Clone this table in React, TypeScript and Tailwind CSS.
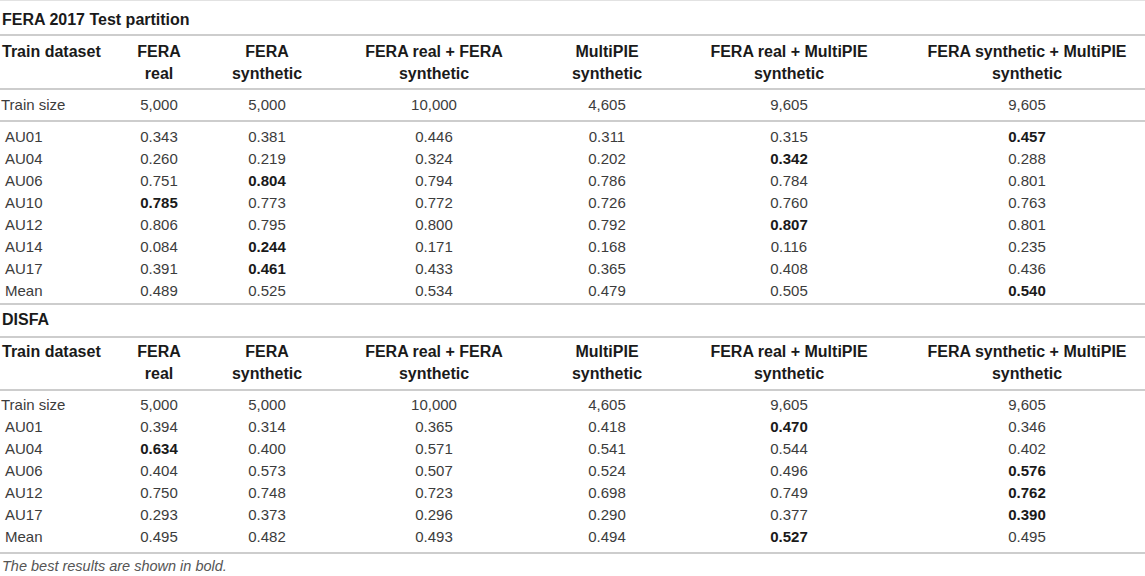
import React from 'react';

const cols = 'grid grid-cols-[107px_104px_112px_222px_124px_240px_236px]';

const headers: [string, string][] = [
  ['FERA', 'real'],
  ['FERA', 'synthetic'],
  ['FERA real + FERA', 'synthetic'],
  ['MultiPIE', 'synthetic'],
  ['FERA real + MultiPIE', 'synthetic'],
  ['FERA synthetic + MultiPIE', 'synthetic'],
];

// a leading * marks the best result in the row
const fera: [string, string[]][] = [
  ['AU01', ['0.343', '0.381', '0.446', '0.311', '0.315', '*0.457']],
  ['AU04', ['0.260', '0.219', '0.324', '0.202', '*0.342', '0.288']],
  ['AU06', ['0.751', '*0.804', '0.794', '0.786', '0.784', '0.801']],
  ['AU10', ['*0.785', '0.773', '0.772', '0.726', '0.760', '0.763']],
  ['AU12', ['0.806', '0.795', '0.800', '0.792', '*0.807', '0.801']],
  ['AU14', ['0.084', '*0.244', '0.171', '0.168', '0.116', '0.235']],
  ['AU17', ['0.391', '*0.461', '0.433', '0.365', '0.408', '0.436']],
  ['Mean', ['0.489', '0.525', '0.534', '0.479', '0.505', '*0.540']],
];

const disfa: [string, string[]][] = [
  ['AU01', ['0.394', '0.314', '0.365', '0.418', '*0.470', '0.346']],
  ['AU04', ['*0.634', '0.400', '0.571', '0.541', '0.544', '0.402']],
  ['AU06', ['0.404', '0.573', '0.507', '0.524', '0.496', '*0.576']],
  ['AU12', ['0.750', '0.748', '0.723', '0.698', '0.749', '*0.762']],
  ['AU17', ['0.293', '0.373', '0.296', '0.290', '0.377', '*0.390']],
  ['Mean', ['0.495', '0.482', '0.493', '0.494', '*0.527', '0.495']],
];

const sizes = ['5,000', '5,000', '10,000', '4,605', '9,605', '9,605'];

function Row({ label, values, indent }: { label: string; values: string[]; indent?: boolean }) {
  return (
    <div className={`${cols} h-[22px] leading-[22px]`}>
      <div className={indent ? 'pl-[5px]' : 'pl-[1px]'}>{label}</div>
      {values.map((v, i) =>
        v.startsWith('*') ? (
          <div key={i} className="text-center font-bold text-[#1a1a1a]">
            {v.slice(1)}
          </div>
        ) : (
          <div key={i} className="text-center">
            {v}
          </div>
        )
      )}
    </div>
  );
}

function Header({ pt, pb }: { pt: string; pb: string }) {
  return (
    <div className={`${cols} ${pt} ${pb} border-b-2 border-[#cdcdcd] font-bold text-[16px] text-[#1a1a1a] leading-[22px]`}>
      <div className="pl-[2px]">Train dataset</div>
      {headers.map(([a, b], i) => (
        <div key={i} className="text-center">
          {a}
          <br />
          {b}
        </div>
      ))}
    </div>
  );
}

export default function App() {
  return (
    <div
      className="w-[1145px] h-[576px] bg-white text-[15px] text-[#3c3c3c] overflow-hidden"
      style={{ fontFamily: '"Liberation Sans", Arial, Helvetica, sans-serif' }}
    >
      {/* FERA 2017 */}
      <div className="border-t border-[#e2e2e2] h-[36px] pt-[9px] pl-[2px] border-b-2 border-b-[#cdcdcd] font-bold text-[16px] text-[#1a1a1a] leading-[20px]">
        FERA 2017 Test partition
      </div>
      <Header pt="pt-[5px]" pb="pb-[3px]" />
      <div className="pt-[4px] pb-[4px] border-b-2 border-[#cdcdcd]">
        <Row label="Train size" values={sizes} />
      </div>
      <div className="pt-[4px] pb-[1px] border-b-2 border-[#cdcdcd]">
        {fera.map(([l, v]) => (
          <Row key={l} label={l} values={v} indent />
        ))}
      </div>

      {/* DISFA */}
      <div className="h-[33px] pt-[5px] pl-[2px] border-b-2 border-[#cdcdcd] font-bold text-[16px] text-[#1a1a1a] leading-[20px]">
        DISFA
      </div>
      <Header pt="pt-[3px]" pb="pb-[4px]" />
      <div className="pt-[3px] pb-[4px] border-b-2 border-[#cdcdcd]">
        <Row label="Train size" values={sizes} />
        {disfa.map(([l, v]) => (
          <Row key={l} label={l} values={v} indent />
        ))}
      </div>

      <p className="pl-[2px] pt-[2px] text-[14.5px] italic leading-[20px] text-[#555]">
        The best results are shown in bold.
      </p>
    </div>
  );
}
